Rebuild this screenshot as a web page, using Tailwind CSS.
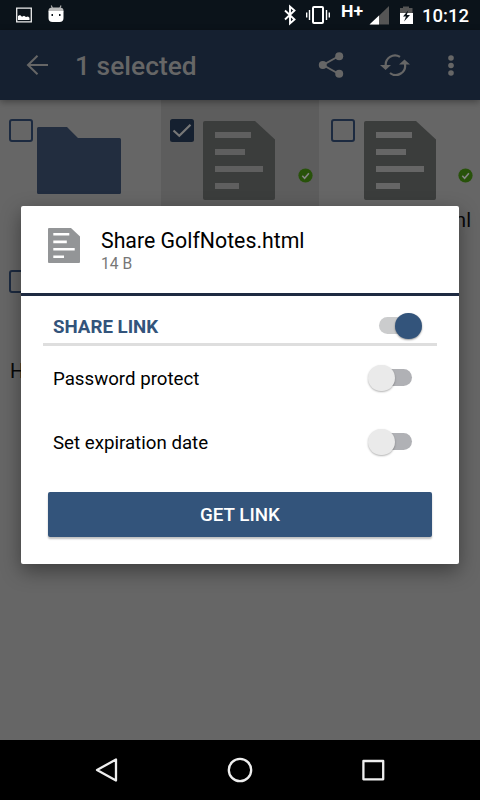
<!DOCTYPE html>
<html lang="en">
  <head>
    <meta charset="UTF-8" />
    <meta name="viewport" content="width=device-width, initial-scale=1.0" />
    <title>Share GolfNotes.html</title>
    <script src="https://cdn.jsdelivr.net/npm/@tailwindcss/browser@4"></script>
  </head>
  <body class="bg-[#666] font-[Roboto,sans-serif] select-none">
    <div class="relative flex flex-col w-[480px] h-[800px] overflow-hidden">
      <!-- status bar -->
      <div class="h-[30px] shrink-0 bg-[#0b131a]">
        <svg class="w-[480px] h-[30px]" viewBox="0 0 480 30" fill="none">
          <path d="M16.7 8.2h14.6v13.6H16.7z" stroke="#eee" stroke-width="1.3" />
          <path d="M18 20v-4l2-1 2 1.7 2-1 2 1.3 2-.5 1.5 1.3V20z" fill="#fff" />
          <path d="M51.3 5.5l1.2 3M61 5.5l-1.2 3" stroke="#aaa" stroke-width="1.2" />
          <path d="M48.5 10.5q0-3 4-3h7q4 0 4 3v1h-15z" fill="#bbb" />
          <path d="M48.5 11h15v7q0 4-4 4h-7q-4 0-4-4z" fill="#fff" />
          <path d="M51.5 14h1.5v2h-1.5zM59 14h1.5v2H59z" fill="#0b131a" />
          <path d="M285 10.5l9.5 9-4.5 4V6.500l4.5 4-9.5 9" stroke="#fff" stroke-width="1.9" />
          <rect x="313" y="7" width="10" height="16" rx="1" stroke="#fff" stroke-width="2" />
          <path d="M309.5 10v10M306.7 12.500v5M326.500 10v10M329.3 12.500v5" stroke="#fff" stroke-width="1.4" />
          <text x="341" y="16.500" textLength="22" lengthAdjust="spacingAndGlyphs" class="font-[Roboto] font-bold text-[16px]" fill="#fff">H+</text>
          <path d="M389 6v18.500h-19z" fill="#555" />
          <path d="M379 15.500v9h-9.500z" fill="#fff" />
          <path d="M403 6.500h6v1.500h3.500v5h-12.500v-5h3z" fill="#555" />
          <path d="M400 13h13v11h-13z" fill="#fff" />
          <path d="M408.300 10.300l-5.300 6.200h3l-2 5 6-6.500h-3.200z" fill="#0b131a" />
          <text x="422" y="22" class="font-[Roboto] font-medium text-[18.500px]" fill="#fff">10:12</text>
        </svg>
      </div>

      <!-- toolbar -->
      <header class="relative z-10 flex items-center h-[70px] shrink-0 bg-[#152030] text-[#666] shadow-[0_2px_7px_rgba(0,0,0,0.35)]">
        <svg class="w-[22px] h-5 ml-[26px]" viewBox="0 0 22 20" fill="none" stroke="currentColor" stroke-width="2">
          <path d="M22 10H2M11.500 .8L2 10l9.500 9.200" />
        </svg>
        <h1 class="ml-[27px] mt-[2px] w-[243px] text-[26.400px] leading-[30px] font-medium">1 selected</h1>
        <svg class="w-[26px] h-[26px]" viewBox="0 0 26 26" fill="currentColor">
          <path d="M21 4L5 13l16 9" fill="none" stroke="currentColor" stroke-width="2" />
          <circle cx="21.200" cy="4.200" r="4" />
          <circle cx="4.800" cy="13" r="4" />
          <circle cx="21.200" cy="21.800" r="4" />
        </svg>
        <svg class="ml-[36px] w-[30px] h-[22px]" viewBox="0 0 30 22" fill="currentColor">
          <path d="M5.800 12A9.300 9.300 0 0 1 20 2.900M24.800 9.500A9.300 9.300 0 0 1 10 19" fill="none" stroke="currentColor" stroke-width="2.200" />
          <path d="M0 11h11l-5.400 5zM19 10.500h11L24.500 5.500z" />
        </svg>
        <svg class="ml-[38px] w-[6px] h-[21px]" viewBox="0 0 6 21" fill="currentColor">
          <circle cx="3" cy="3" r="2.800" />
          <circle cx="3" cy="10.500" r="2.800" />
          <circle cx="3" cy="18" r="2.800" />
        </svg>
      </header>

      <!-- file grid -->
      <main class="grid grid-cols-[161px_158px_161px] auto-rows-[151px] flex-1 content-start bg-[#666] text-[#080808] text-[20px]">
        <div class="flex items-start pl-[9px] pt-[19px]">
          <div class="w-6 h-[23px] rounded-[3px] border-[2.500px] border-[#1c2a40]"></div>
          <svg class="w-[84px] h-[67px] ml-[4px] mt-[8px]" viewBox="0 0 84 67">
            <path d="M1.500 0H30l11 11h41.500Q84 11 84 12.500v53Q84 67 82.500 67h-81Q0 67 0 65.500v-64Q0 0 1.500 0z" fill="#222d3f" />
          </svg>
        </div>
        <div class="flex items-start pl-[9px] pt-[19px] bg-[#5d5d5d]">
          <svg class="w-6 h-[23px]" viewBox="0 0 24 23">
            <rect width="24" height="23" rx="2.500" fill="#152030" />
            <path d="M3.500 11.500l5.800 5.300L20.500 5.800" fill="none" stroke="#777" stroke-width="2.200" />
          </svg>
          <svg class="w-[72px] h-[79px] ml-[9px] mt-[2px]" viewBox="0 0 72 79">
            <path d="M2 0h50l20 18.500V77q0 2-2 2H2q-2 0-2-2V2q0-2 2-2z" fill="#3b3d3c" />
            <path d="M12 11h36v6H12zM12 28h30v6H12zM12 45h48v6H12zM12 62h24v6H12z" fill="#5f5f5f" />
          </svg>
          <svg class="w-[15px] h-[15px] ml-[23px] mt-[49px]" viewBox="0 0 15 15">
            <circle cx="7.500" cy="7.500" r="7.100" fill="#28520a" />
            <path d="M4.300 7.800l2.300 2.400 4.300-5" fill="none" stroke="#858585" stroke-width="1.600" />
          </svg>
        </div>
        <div class="flex flex-col">
          <div class="flex items-start pl-3 pt-[19px]">
            <div class="w-6 h-[23px] rounded-[3px] border-[2.500px] border-[#1c2a40]"></div>
            <svg class="w-[72px] h-[79px] ml-[9px] mt-[2px]" viewBox="0 0 72 79">
              <path d="M2 0h50l20 18.500V77q0 2-2 2H2q-2 0-2-2V2q0-2 2-2z" fill="#3b3d3c" />
              <path d="M12 11h36v6H12zM12 28h30v6H12zM12 45h48v6H12zM12 62h24v6H12z" fill="#666" />
            </svg>
            <svg class="w-[15px] h-[15px] ml-[22px] mt-[49px]" viewBox="0 0 15 15">
              <circle cx="7.500" cy="7.500" r="7.100" fill="#28520a" />
              <path d="M4.300 7.800l2.300 2.400 4.300-5" fill="none" stroke="#858585" stroke-width="1.600" />
            </svg>
          </div>
          <p class="mt-[8px] pr-[9px] text-right leading-6">html</p>
        </div>
        <div class="pl-[9px] pt-[19px]">
          <div class="w-6 h-[23px] rounded-[3px] border-[2.500px] border-[#1c2a40]"></div>
          <p class="ml-px mt-[66px] leading-6">H</p>
        </div>
      </main>

      <!-- navigation bar -->
      <footer class="h-[60px] shrink-0 bg-black">
        <svg class="w-[480px] h-[60px]" viewBox="0 0 480 60" fill="none" stroke="#eee" stroke-width="2.300" stroke-linejoin="round">
          <path d="M116 19.500v21L97 30z" />
          <circle cx="240" cy="30" r="11.200" />
          <rect x="363.400" y="21" width="19.800" height="18.300" />
        </svg>
      </footer>

      <!-- share dialog -->
      <section class="absolute z-20 left-[21px] top-[206px] w-[438px] h-[358px] flex flex-col rounded-[2px] bg-white shadow-[0_7px_20px_rgba(0,0,0,0.4)]">
        <div class="flex h-[90px] border-b-[3px] border-[#1e2a41] pl-[27px]">
          <svg class="w-8 h-[35px] mt-[22px]" viewBox="0 0 32 35">
            <path d="M1 0h22l9 8.500V34q0 1-1 1H1q-1 0-1-1V1q0-1 1-1z" fill="#939597" />
            <path d="M5.300 5h16v2.600h-16zM5.300 12.600h13.500v2.600H5.300zM5.300 20h21.400v2.600H5.300zM5.300 27.500H16v2.600H5.300z" fill="#fff" />
          </svg>
          <div class="ml-[21px] pt-[23px]">
            <h2 class="text-[21.300px] leading-6 text-black">Share GolfNotes.html</h2>
            <p class="-mt-px text-[15.600px] leading-6 text-[#777]">14 B</p>
          </div>
        </div>
        <div class="flex justify-between h-[50px] mx-[22px] pl-[10px] pr-[14px] border-b-[3px] border-[#dedede]">
          <span class="mt-[19px] text-[18.700px] leading-6 font-bold text-[#33547b]">SHARE LINK</span>
          <div class="relative w-11 h-[17px] mt-[21px]">
            <div class="w-9 h-[17px] rounded-full bg-[#cbcccd]"></div>
            <div class="absolute left-4 top-[-4px] w-[27px] h-[26px] rounded-full bg-[#33547b] shadow-[0_1px_2px_rgba(0,0,0,0.4)]"></div>
          </div>
        </div>
        <div class="flex items-center justify-between h-16 pl-8 pr-[47px]">
          <span class="mt-0.5 text-[18.700px] text-black">Password protect</span>
          <div class="relative flex justify-end w-11 h-[17px] mb-[2px]">
            <div class="w-9 h-[17px] rounded-full bg-[#b0b1b5]"></div>
            <div class="absolute left-0 top-[-4px] w-[27px] h-[26px] rounded-full bg-[#eaeaea] shadow-[0_1px_2px_rgba(0,0,0,0.3)]"></div>
          </div>
        </div>
        <div class="flex items-center justify-between h-16 pl-8 pr-[47px]">
          <span class="mt-0.5 text-[18.700px] text-black">Set expiration date</span>
          <div class="relative flex justify-end w-11 h-[17px] mb-[2px]">
            <div class="w-9 h-[17px] rounded-full bg-[#b0b1b5]"></div>
            <div class="absolute left-0 top-[-4px] w-[27px] h-[26px] rounded-full bg-[#eaeaea] shadow-[0_1px_2px_rgba(0,0,0,0.3)]"></div>
          </div>
        </div>
        <button class="mx-[27px] mt-[18px] h-[45px] pt-0.5 rounded-[2px] bg-[#33547b] text-[18.800px] font-medium text-white shadow-[0_2px_2px_rgba(0,0,0,0.25)]">GET LINK</button>
      </section>
    </div>
  </body>
</html>
